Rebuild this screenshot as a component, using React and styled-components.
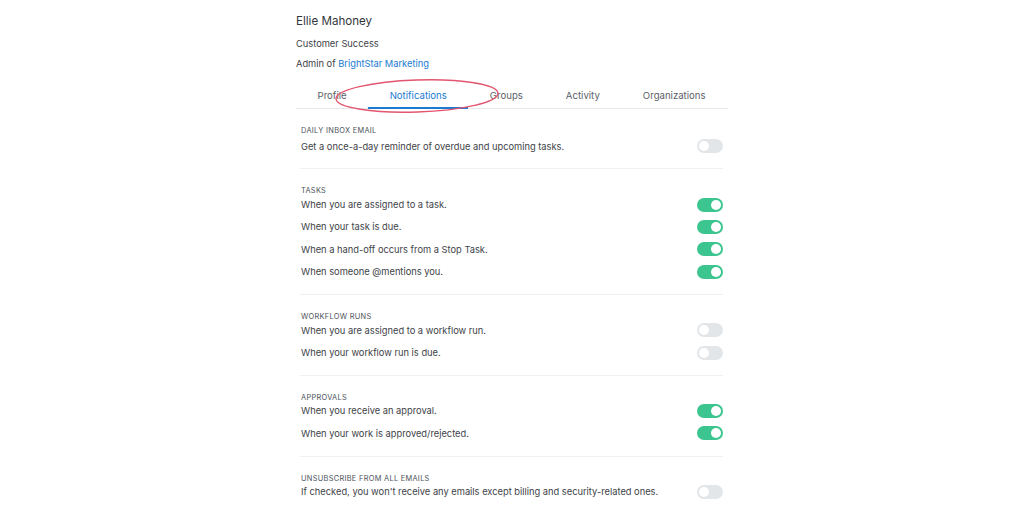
import React from 'react';
import styled, { createGlobalStyle } from 'styled-components';

const GlobalStyle = createGlobalStyle`
  body {
    margin: 0;
    background: #fff;
    font-family: Inter, 'Noto Sans', 'Liberation Sans', sans-serif;
    color: #3a3f45;
  }
`;

const Page = styled.div`
  width: 432px;
  margin: 0 auto;
  padding-top: 11px;
`;

const Name = styled.div`
  font-size: 11.6px;
  line-height: 20px;
  color: #33373c;
`;

const SubLine = styled.div`
  font-size: 9.3px;
  line-height: 20px;
  color: #3e4348;
  margin-top: ${props => (props.first ? '3px' : '0')};
`;

const Link = styled.a`
  color: #1a7bd0;
  text-decoration: none;
`;

const TabBar = styled.div`
  position: relative;
  display: flex;
  margin-top: 9px;
  border-bottom: 1px solid #e6e8ea;
`;

const Tab = styled.div`
  padding: 6px 21.5px 4px;
  font-size: 9.6px;
  line-height: 14px;
  color: ${props => (props.active ? '#1a7bd0' : '#5b6168')};
  border-bottom: 2px solid ${props => (props.active ? '#1a7bd0' : 'transparent')};
  margin-bottom: -1px;
`;

const Annotation = styled.svg`
  position: absolute;
  left: 37px;
  top: -7px;
  pointer-events: none;
`;

const Sections = styled.div`
  padding: 0 5px 0 4px;
`;

const Section = styled.section`
  padding: 17px 0 11px;
  border-bottom: ${props => (props.last ? 'none' : '1px solid #eef0f2')};
`;

const Label = styled.div`
  font-size: 7.4px;
  line-height: 9px;
  letter-spacing: 0.3px;
  text-transform: uppercase;
  color: #4d535a;
  padding-left: 1px;
  margin-bottom: ${props => (props.first ? '0' : '-2px')};
`;

const Row = styled.div`
  display: flex;
  align-items: center;
  justify-content: space-between;
  height: 22.4px;
  padding-left: 1px;
  font-size: 9.3px;
  color: #3e4348;
`;

const Toggle = styled.div`
  position: relative;
  flex-shrink: 0;
  width: 26px;
  height: 14px;
  border-radius: 7px;
  background: ${props => (props.on ? '#3cc58e' : '#e3e6e9')};

  &::after {
    content: '';
    position: absolute;
    top: 2px;
    left: ${props => (props.on ? '14px' : '2px')};
    width: 10px;
    height: 10px;
    border-radius: 50%;
    background: #fff;
  }
`;

const tabs = ['Profile', 'Notifications', 'Groups', 'Activity', 'Organizations'];

const sections = [
  {
    label: 'Daily inbox email',
    rows: [['Get a once-a-day reminder of overdue and upcoming tasks.', false]],
  },
  {
    label: 'Tasks',
    rows: [
      ['When you are assigned to a task.', true],
      ['When your task is due.', true],
      ['When a hand-off occurs from a Stop Task.', true],
      ['When someone @mentions you.', true],
    ],
  },
  {
    label: 'Workflow runs',
    rows: [
      ['When you are assigned to a workflow run.', false],
      ['When your workflow run is due.', false],
    ],
  },
  {
    label: 'Approvals',
    rows: [
      ['When you receive an approval.', true],
      ['When your work is approved/rejected.', true],
    ],
  },
  {
    label: 'Unsubscribe from all emails',
    rows: [["If checked, you won't receive any emails except billing and security-related ones.", false]],
  },
];

export default function App() {
  return (
    <>
      <GlobalStyle />
      <Page>
        <Name>Ellie Mahoney</Name>
        <SubLine first>Customer Success</SubLine>
        <SubLine>
          Admin of <Link href="#">BrightStar Marketing</Link>
        </SubLine>
        <TabBar>
          {tabs.map(t => (
            <Tab key={t} active={t === 'Notifications'}>
              {t}
            </Tab>
          ))}
          <Annotation width="172" height="42" viewBox="0 0 172 42">
            <ellipse
              cx="84"
              cy="20"
              rx="81"
              ry="16"
              fill="none"
              stroke="#e2566f"
              strokeWidth="1.4"
              transform="rotate(-2 84 20)"
            />
          </Annotation>
        </TabBar>
        <Sections>
          {sections.map((s, i) => (
            <Section key={s.label} last={i === sections.length - 1}>
              <Label first={i === 0}>{s.label}</Label>
              {s.rows.map(([text, on]) => (
                <Row key={text}>
                  <span>{text}</span>
                  <Toggle on={on} />
                </Row>
              ))}
            </Section>
          ))}
        </Sections>
      </Page>
    </>
  );
}
